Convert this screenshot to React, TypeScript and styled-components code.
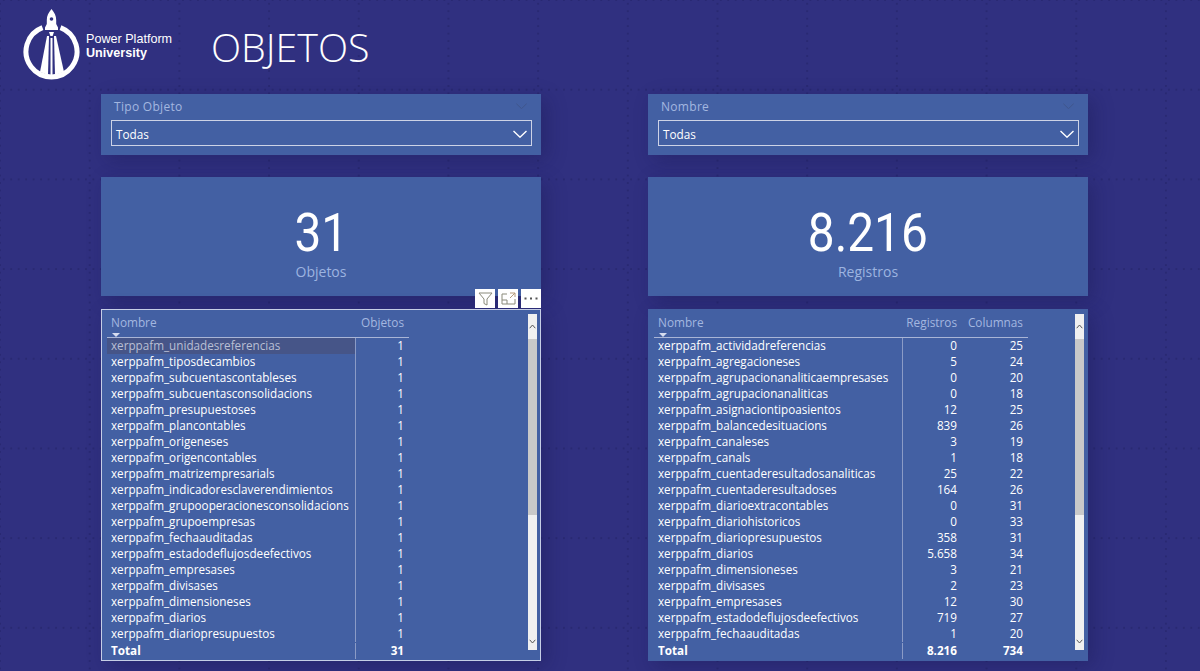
import React from "react";
import styled, { createGlobalStyle } from "styled-components";

const Global = createGlobalStyle`
  html, body { margin: 0; padding: 0; background: #303080; }
  * { box-sizing: border-box; }
`;

const Page = styled.div`
  width: 1200px;
  height: 671px;
  overflow: hidden;
  font-family: "Open Sans", "Liberation Sans", sans-serif;
  background-color: #303080;
  background-image:
    radial-gradient(circle, rgba(18, 18, 70, 0.42) 0.5px, transparent 0.9px),
    radial-gradient(circle, rgba(18, 18, 70, 0.42) 0.5px, transparent 0.9px);
  background-size: 7.475px 89.7px, 89.7px 7.475px;
  background-position: 0 44.85px, 44.85px 0;
`;

const Header = styled.header`
  height: 94px;
  display: flex;
  align-items: flex-start;
  padding-left: 20px;
`;

const LogoMark = styled.svg`
  width: 62px;
  height: 84px;
  margin-top: 3px;
  flex: none;
`;

const LogoText = styled.div`
  margin: 32px 0 0 4px;
  width: 126px;
  flex: none;
  font-family: "Liberation Sans", Arial, sans-serif;
  font-size: 12.6px;
  line-height: 14px;
  color: #fff;
`;

const LogoBold = styled.div`
  font-weight: 700;
`;

const Title = styled.h1`
  margin: 23px 0 0 -1px;
  font-family: "Open Sans", sans-serif;
  font-weight: 300;
  font-size: 39.4px;
  line-height: 48px;
  color: #fff;
`;

const Columns = styled.main`
  display: flex;
  gap: 107px;
  padding-left: 101px;
`;

const Column = styled.section`
  width: 440px;
  display: flex;
  flex-direction: column;
`;

const Slicer = styled.div`
  height: 61px;
  background: #4360a3;
  padding: 2px 9px 0 10px;
  box-shadow: 6px 5px 18px rgba(20, 20, 70, 0.3);
`;

const SlicerHead = styled.div`
  height: 24px;
  display: flex;
  align-items: center;
  justify-content: space-between;
  padding: 0 5px 4px 3px;
  font-size: 12px;
  letter-spacing: 0.3px;
  color: #a3b7e0;
`;

const SlicerBox = styled.div`
  height: 26px;
  border: 1.5px solid #cdd3e6;
  display: flex;
  align-items: center;
  justify-content: space-between;
  padding: 2px 4px 0 4px;
  font-size: 11.75px;
  color: #fff;
`;

const Card = styled.div`
  height: 119px;
  margin-top: 22px;
  background: #4360a3;
  display: flex;
  flex-direction: column;
  align-items: center;
  box-shadow: 6px 5px 18px rgba(20, 20, 70, 0.3);
`;

const CardValue = styled.div`
  margin-top: 27px;
  font-family: Roboto, sans-serif;
  font-size: 54px;
  line-height: 58px;
  color: #fff;
  transform: scaleX(0.885);
`;

const CardLabel = styled.div`
  font-size: 14px;
  line-height: 20px;
  color: #9db4e0;
`;

const TablePanel = styled.div<{ $focused?: boolean }>`
  position: relative;
  height: 352px;
  margin-top: 13px;
  background: #4360a3;
  border: 1px solid ${(p) => (p.$focused ? "#c6cee6" : "#4360a3")};
  padding: 5px 3px 0 4px;
  display: flex;
  justify-content: space-between;
  box-shadow: 6px 5px 18px rgba(20, 20, 70, 0.3);
`;

const Actions = styled.div`
  position: absolute;
  top: -21px;
  right: -1px;
  display: flex;
  gap: 3px;
`;

const ActionButton = styled.div`
  width: 20px;
  height: 19px;
  background: #fff;
  display: flex;
  align-items: center;
  justify-content: center;
`;

const Grid = styled.div`
  display: flex;
  flex-direction: column;
  font-size: 11.7px;
`;

const HeadRow = styled.div<{ $cols: string }>`
  display: grid;
  grid-template-columns: ${(p) => p.$cols};
  height: 23px;
  border-bottom: 1px solid #a9b5d6;
  color: #a3b7e0;
  font-size: 11.8px;
  margin-left: 1px;
`;

const Row = styled.div<{ $cols: string; $total?: boolean }>`
  display: grid;
  grid-template-columns: ${(p) => p.$cols};
  height: 16px;
  line-height: 15px;
  color: #fff;
  font-weight: ${(p) => (p.$total ? 700 : 400)};
  margin-top: ${(p) => (p.$total ? "1px" : "0")};
  margin-left: 1px;
`;

const HeadName = styled.div`
  position: relative;
  padding-left: 4px;
  line-height: 15px;
`;

const SortMark = styled.span`
  position: absolute;
  left: 5px;
  top: 18px;
  width: 0;
  height: 0;
  border-left: 4px solid transparent;
  border-right: 4px solid transparent;
  border-top: 4px solid #d6dcef;
`;

const HeadNum = styled.div`
  text-align: right;
  padding-right: 5px;
  line-height: 15px;
`;

const Name = styled.div<{ $selected?: boolean }>`
  padding-left: 4px;
  white-space: nowrap;
  overflow: hidden;
  background: ${(p) => (p.$selected ? "#465588" : "transparent")};
  color: ${(p) => (p.$selected ? "#b9bfd4" : "inherit")};
`;

const Num = styled.div<{ $first?: boolean }>`
  text-align: right;
  padding-right: 5px;
  border-left: ${(p) => (p.$first ? "1px solid #8b9bc6" : "none")};
`;

const Scrollbar = styled.div`
  width: 9px;
  height: 336px;
  margin-top: -1px;
  background: #f0f0f0;
  display: flex;
  flex-direction: column;
`;

const ScrollButton = styled.div<{ $end?: boolean }>`
  height: 25px;
  display: flex;
  justify-content: center;
  align-items: ${(p) => (p.$end ? "flex-end" : "center")};
  padding-bottom: ${(p) => (p.$end ? "6px" : "0")};
  margin-top: ${(p) => (p.$end ? "auto" : "0")};
`;

const ScrollThumb = styled.div`
  height: 176px;
  background: #c9c9c9;
`;

const Chevron = ({ size, color, sw = 1.4 }: { size: number; color: string; sw?: number }) => (
  <svg width={size} height={size * 0.6} viewBox="0 0 14 8" fill="none" stroke={color} strokeWidth={sw}>
    <path d="M0.5 0.7 L7 7 L13.5 0.7" />
  </svg>
);

const ScrollArrow = ({ up }: { up?: boolean }) => (
  <svg width="7" height="5" viewBox="0 0 7 5" fill="none" stroke="#555" strokeWidth="1">
    <path d={up ? "M0.7 4.2 L3.5 1 L6.3 4.2" : "M0.7 0.8 L3.5 4 L6.3 0.8"} />
  </svg>
);

const Logo = () => (
  <LogoMark viewBox="0 0 62 84">
    <path
      d="M22.5 24.6 A 25.5 25.5 0 1 0 40.5 24.6"
      fill="none"
      stroke="#fff"
      strokeWidth="5"
    />
    <path
      d="M31.5 6 C28.5 9.5 26.8 13 26.8 17 L26.8 21 L25 24.5 L25 27 L38 27 L38 24.5 L36.2 21 L36.2 17 C36.2 13 34.5 9.5 31.5 6 Z"
      fill="#fff"
    />
    <circle cx="31.5" cy="16" r="1.8" fill="#303080" />
    <path d="M29 29 L34 29 L32.6 33 L30.4 33 Z" fill="#fff" />
    <path d="M27 33 L29 33 L28 72 L20 69 Z" fill="#fff" />
    <path d="M30.5 35 L32.5 35 L32.5 74 L30.5 74 Z" fill="#fff" />
    <path d="M34 33 L36 33 L44 69 L35 72 Z" fill="#fff" />
  </LogoMark>
);

const FilterIcon = () => (
  <svg width="15" height="14" viewBox="0 0 15 14" fill="none" stroke="#8a8a7a" strokeWidth="1">
    <path d="M1 1 H14 L9 7 V13 L6 11.5 V7 Z" />
  </svg>
);

const FocusIcon = () => (
  <svg width="15" height="13" viewBox="0 0 15 13" fill="none" stroke="#8a8a7a" strokeWidth="1">
    <path d="M6 2 H1 V12 H14 V7" />
    <path d="M9 1 H14 V5 M14 1 L9 6" stroke="#b59a7a" />
    <path d="M1 8 H6 V12" />
  </svg>
);

const DotsIcon = () => (
  <svg width="14" height="3" viewBox="0 0 14 3" fill="#555">
    <rect x="0.5" y="0.5" width="2" height="2" />
    <rect x="6" y="0.5" width="2" height="2" />
    <rect x="11.5" y="0.5" width="2" height="2" />
  </svg>
);

type TableRow = { name: string; values: string[] };

const objetos: TableRow[] = [
  "unidadesreferencias",
  "tiposdecambios",
  "subcuentascontableses",
  "subcuentasconsolidacions",
  "presupuestoses",
  "plancontables",
  "origeneses",
  "origencontables",
  "matrizempresarials",
  "indicadoresclaverendimientos",
  "grupooperacionesconsolidacions",
  "grupoempresas",
  "fechaauditadas",
  "estadodeflujosdeefectivos",
  "empresases",
  "divisases",
  "dimensioneses",
  "diarios",
  "diariopresupuestos",
].map((n) => ({ name: "xerppafm_" + n, values: ["1"] }));

const registros: TableRow[] = (
  [
    ["actividadreferencias", "0", "25"],
    ["agregacioneses", "5", "24"],
    ["agrupacionanaliticaempresases", "0", "20"],
    ["agrupacionanaliticas", "0", "18"],
    ["asignaciontipoasientos", "12", "25"],
    ["balancedesituacions", "839", "26"],
    ["canaleses", "3", "19"],
    ["canals", "1", "18"],
    ["cuentaderesultadosanaliticas", "25", "22"],
    ["cuentaderesultadoses", "164", "26"],
    ["diarioextracontables", "0", "31"],
    ["diariohistoricos", "0", "33"],
    ["diariopresupuestos", "358", "31"],
    ["diarios", "5.658", "34"],
    ["dimensioneses", "3", "21"],
    ["divisases", "2", "23"],
    ["empresases", "12", "30"],
    ["estadodeflujosdeefectivos", "719", "27"],
    ["fechaauditadas", "1", "20"],
  ] as string[][]
).map(([n, a, b]) => ({ name: "xerppafm_" + n, values: [a, b] }));

type DataTableProps = {
  cols: string;
  headers: string[];
  rows: TableRow[];
  totals: string[];
  selected?: number;
  focused?: boolean;
  sorted?: boolean;
};

const DataTable = ({ cols, headers, rows, totals, selected, focused, sorted }: DataTableProps) => (
  <TablePanel $focused={focused}>
    {focused && (
      <Actions>
        <ActionButton><FilterIcon /></ActionButton>
        <ActionButton><FocusIcon /></ActionButton>
        <ActionButton><DotsIcon /></ActionButton>
      </Actions>
    )}
    <Grid>
      <HeadRow $cols={cols}>
        <HeadName>
          Nombre
          {sorted && <SortMark />}
        </HeadName>
        {headers.map((h) => (
          <HeadNum key={h}>{h}</HeadNum>
        ))}
      </HeadRow>
      {rows.map((r, i) => (
        <Row $cols={cols} key={r.name}>
          <Name $selected={i === selected}>{r.name}</Name>
          {r.values.map((v, j) => (
            <Num $first={j === 0} key={j}>{v}</Num>
          ))}
        </Row>
      ))}
      <Row $cols={cols} $total>
        <Name>Total</Name>
        {totals.map((v, j) => (
          <Num $first={j === 0} key={j}>{v}</Num>
        ))}
      </Row>
    </Grid>
    <Scrollbar>
      <ScrollButton><ScrollArrow up /></ScrollButton>
      <ScrollThumb />
      <ScrollButton $end><ScrollArrow /></ScrollButton>
    </Scrollbar>
  </TablePanel>
);

const SlicerCard = ({ title }: { title: string }) => (
  <Slicer>
    <SlicerHead>
      {title}
      <Chevron size={11} color="#3e5386" sw={1} />
    </SlicerHead>
    <SlicerBox>
      Todas
      <Chevron size={14} color="#fff" />
    </SlicerBox>
  </Slicer>
);

export default function App() {
  return (
    <Page>
      <Global />
      <Header>
        <Logo />
        <LogoText>
          Power Platform
          <LogoBold>University</LogoBold>
        </LogoText>
        <Title>OBJETOS</Title>
      </Header>
      <Columns>
        <Column>
          <SlicerCard title="Tipo Objeto" />
          <Card>
            <CardValue>31</CardValue>
            <CardLabel>Objetos</CardLabel>
          </Card>
          <DataTable
            focused
            sorted
            selected={0}
            cols="248px 54px"
            headers={["Objetos"]}
            rows={objetos}
            totals={["31"]}
          />
        </Column>
        <Column>
          <SlicerCard title="Nombre" />
          <Card>
            <CardValue>8.216</CardValue>
            <CardLabel>Registros</CardLabel>
          </Card>
          <DataTable
            sorted
            cols="248px 60px 66px"
            headers={["Registros", "Columnas"]}
            rows={registros}
            totals={["8.216", "734"]}
          />
        </Column>
      </Columns>
    </Page>
  );
}
